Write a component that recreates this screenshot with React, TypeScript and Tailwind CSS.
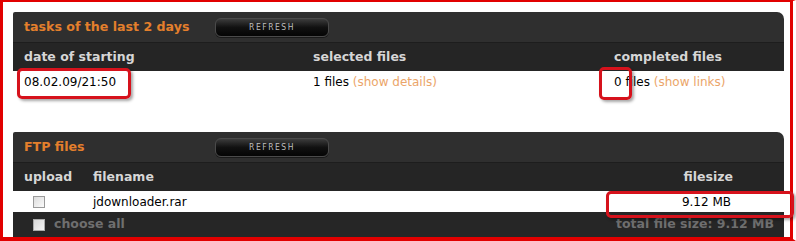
import { FC } from "react";

const font = { fontFamily: '"DejaVu Sans", Verdana, Tahoma, sans-serif' };

const RefreshButton: FC = () => (
  <button
    className="ml-[191px] mt-px w-[114px] h-[19px] rounded-[6px] bg-gradient-to-b from-[#3c3c3c] via-[#111111] to-[#050505] border border-[#4a4a4a] shadow-[0_1px_0_#1a1a1a] text-[8.5px] tracking-[1.5px] text-[#bdbdbd] leading-none"
    style={{ fontFamily: '"DejaVu Sans Condensed", "DejaVu Sans", sans-serif' }}
  >
    REFRESH
  </button>
);

const Mark: FC<{ className: string }> = ({ className }) => (
  <div
    className={
      "absolute rounded-[5px] border-[3px] border-[#d6121c] shadow-[2px_2px_3px_rgba(0,0,0,0.35)] " +
      className
    }
  />
);

const Checkbox: FC<{ dark?: boolean }> = ({ dark }) => (
  <span
    className={
      "inline-block w-[12px] h-[12px] border " +
      (dark
        ? "border-[#aaaaaa] bg-gradient-to-br from-[#d8d8d8] to-[#f4f4f4]"
        : "border-[#9a9a9a] bg-gradient-to-br from-[#dcdcdc] to-[#fbfbfb]")
    }
  />
);

const App: FC = () => {
  return (
    <div
      className="relative w-[796px] h-[241px] bg-white box-border border-l-[3px] border-t-2 border-r-[6px] border-r-transparent border-b-[4px] border-[#e10000] text-[12px]"
      style={font}
    >
      <div className="absolute right-[-6px] top-[-2px] w-[3px] h-[241px] bg-[#e10000] -translate-x-[3px]" />

      <div className="pl-[10px] pt-[10px]">
        {/* tasks panel */}
        <section className="w-[771px]">
          <div className="h-[30px] flex items-center bg-[#2f2f2f] rounded-tr-[7px] rounded-tl-[2px] pl-[11px]">
            <h2 className="w-[167px] whitespace-nowrap font-bold text-[12.6px] text-[#e47f2c]">tasks of the last 2 days</h2>
            <div className="-ml-[167px]">
              <RefreshButton />
            </div>
          </div>
          <div className="h-[29px] grid grid-cols-[289px_301px_1fr] items-center bg-[#252525] border-t border-[#1d1d1d] pl-[11px] font-bold text-[12.5px] text-[#d6d6d6]">
            <span>date of starting</span>
            <span>selected files</span>
            <span>completed files</span>
          </div>
          <div className="h-[22px] grid grid-cols-[289px_301px_1fr] items-center pl-[11px] text-[12px] text-black">
            <span>08.02.09/21:50</span>
            <span>
              1 files <span className="text-[#eba569]">(show details)</span>
            </span>
            <span>
              0 files <span className="text-[#eba569]">(show links)</span>
            </span>
          </div>
        </section>

        {/* FTP panel */}
        <section className="w-[771px] mt-[39px]">
          <div className="h-[30px] flex items-center bg-[#2f2f2f] rounded-tr-[7px] rounded-tl-[2px] pl-[11px]">
            <h2 className="w-[167px] whitespace-nowrap font-bold text-[12.6px] text-[#e47f2c]">FTP files</h2>
            <div className="-ml-[167px]">
              <RefreshButton />
            </div>
          </div>
          <div className="h-[29px] flex items-center bg-[#252525] border-t border-[#1d1d1d] pl-[11px] pr-[51px] font-bold text-[12.5px] text-[#d6d6d6]">
            <span className="w-[69px]">upload</span>
            <span className="flex-1">filename</span>
            <span>filesize</span>
          </div>
          <div className="h-[21px] flex items-center pl-[20px] pr-[53px] text-[12px] text-black">
            <span className="w-[60px] flex"><Checkbox /></span>
            <span className="flex-1">jdownloader.rar</span>
            <span>9.12 MB</span>
          </div>
          <div className="h-[25px] flex items-center bg-[#262626] pl-[20px] pr-[10px] font-bold text-[12.5px] text-[#6f6f6f]">
            <Checkbox dark />
            <span className="ml-[9px] flex-1">choose all</span>
            <span>total file size: 9.12 MB</span>
          </div>
        </section>
      </div>

      <Mark className="left-[14px] top-[66px] w-[114px] h-[31px]" />
      <Mark className="left-[596px] top-[65px] w-[33px] h-[33px]" />
      <Mark className="left-[603px] top-[189px] w-[188px] h-[27px]" />
    </div>
  );
};

export default App;
